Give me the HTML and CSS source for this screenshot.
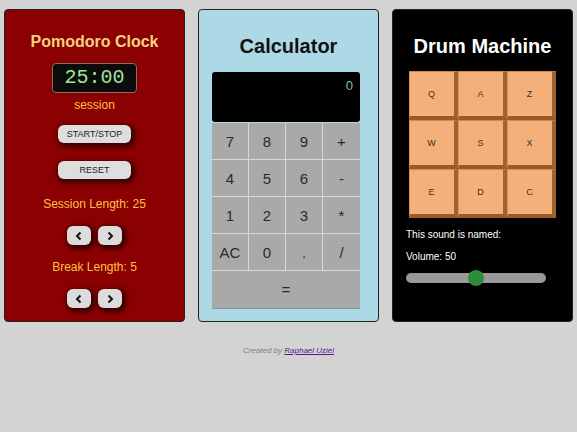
FILE: index.html
```html
<!DOCTYPE html>
<html>
<head>
<meta charset="utf-8">
<link rel="stylesheet" href="styles.css">
</head>
<body>
<main class="cards">
  <section class="card pomodoro">
    <h2 class="pomo-title">Pomodoro Clock</h2>
    <div class="timer">25:00</div>
    <div class="label session">session</div>
    <button class="pill start">START/STOP</button>
    <button class="pill reset">RESET</button>
    <div class="label len">Session Length: 25</div>
    <div class="arrows">
      <button class="arrow"><svg width="10" height="10" viewBox="0 0 10 10"><path d="M6.5 1.5 L3 5 L6.5 8.5" fill="none" stroke="#111" stroke-width="2"/></svg></button>
      <button class="arrow"><svg width="10" height="10" viewBox="0 0 10 10"><path d="M3.5 1.5 L7 5 L3.5 8.5" fill="none" stroke="#111" stroke-width="2"/></svg></button>
    </div>
    <div class="label len break">Break Length: 5</div>
    <div class="arrows">
      <button class="arrow"><svg width="10" height="10" viewBox="0 0 10 10"><path d="M6.5 1.5 L3 5 L6.5 8.5" fill="none" stroke="#111" stroke-width="2"/></svg></button>
      <button class="arrow"><svg width="10" height="10" viewBox="0 0 10 10"><path d="M3.5 1.5 L7 5 L3.5 8.5" fill="none" stroke="#111" stroke-width="2"/></svg></button>
    </div>
  </section>

  <section class="card calculator">
    <h2 class="big-title calc-title">Calculator</h2>
    <div class="calc">
      <div class="display">0</div>
      <div class="keys">
        <button class="key">7</button><button class="key">8</button><button class="key">9</button><button class="key">+</button>
        <button class="key">4</button><button class="key">5</button><button class="key">6</button><button class="key">-</button>
        <button class="key">1</button><button class="key">2</button><button class="key">3</button><button class="key">*</button>
        <button class="key">AC</button><button class="key">0</button><button class="key">.</button><button class="key">/</button>
        <button class="key equals">=</button>
      </div>
    </div>
  </section>

  <section class="card drum">
    <h2 class="big-title drum-title">Drum Machine</h2>
    <div class="pads">
      <div class="pad">Q</div><div class="pad">A</div><div class="pad">Z</div>
      <div class="pad">W</div><div class="pad">S</div><div class="pad">X</div>
      <div class="pad">E</div><div class="pad">D</div><div class="pad">C</div>
    </div>
    <p class="drum-text sound">This sound is named:</p>
    <p class="drum-text volume">Volume: 50</p>
    <input class="slider" type="range" min="0" max="100" value="50">
  </section>
</main>
<footer class="footer">Created by <a href="#">Raphael Uziel</a></footer>
</body>
</html>
```
FILE: styles.css
```css
* { box-sizing: border-box; }
html, body { margin: 0; padding: 0; }
body {
  background: #d3d3d3;
  font-family: "Liberation Sans", Arial, sans-serif;
  width: 577px;
  height: 432px;
  overflow: hidden;
}
.cards {
  display: flex;
  justify-content: center;
  gap: 13px;
  padding-top: 9px;
}
.card {
  width: 181px;
  height: 313px;
  border: 1px solid #222;
  border-radius: 4px;
  display: flex;
  flex-direction: column;
  align-items: center;
}
h2 { margin: 0; }

/* Pomodoro */
.pomodoro { background: #8b0000; padding-top: 23px; }
.pomo-title {
  color: #f7d27e;
  font-size: 16px;
  line-height: 18px;
  font-weight: bold;
}
.timer {
  margin-top: 12px;
  width: 85px;
  height: 30px;
  background: #0b0b0b;
  border: 1px solid #8a6a6a;
  border-radius: 4px;
  color: #9ee69a;
  font-family: "Liberation Mono", monospace;
  font-size: 20px;
  line-height: 28px;
  text-align: center;
}
.label {
  color: #ffc243;
  font-size: 12px;
  line-height: 14px;
}
.session { margin-top: 5px; }
.pill {
  width: 73px;
  height: 18px;
  border: none;
  border-radius: 6px;
  background: #dedede;
  color: #222;
  font-family: "Liberation Sans", Arial, sans-serif;
  font-size: 9px;
  padding: 0;
  box-shadow: 2px 2px 5px 2px rgba(30, 0, 0, 0.75);
}
.start { margin-top: 13px; }
.reset { margin-top: 18px; }
.len { margin-top: 18px; }
.break { margin-top: 15px; }
.arrows {
  display: flex;
  gap: 7px;
  margin-top: 15px;
}
.arrow {
  width: 24px;
  height: 19px;
  border: none;
  border-radius: 6px;
  background: #dcdcdc;
  padding: 0;
  display: flex;
  align-items: center;
  justify-content: center;
  box-shadow: 2px 2px 5px 2px rgba(30, 0, 0, 0.75);
}

/* Calculator */
.calculator { background: #add8e6; padding-top: 25px; }
.big-title {
  font-size: 20px;
  line-height: 23px;
  font-weight: bold;
}
.calc-title { color: #111; }
.calc {
  margin-top: 14px;
  align-self: flex-start;
  margin-left: 13px;
  width: 148px;
}
.display {
  height: 50px;
  background: #000;
  border-radius: 3px;
  color: #8fbf8f;
  font-size: 13px;
  text-align: right;
  padding: 6px 7px 0 0;
  line-height: 15px;
}
.keys {
  margin-top: 1px;
  display: grid;
  grid-template-columns: repeat(4, 37px);
  grid-auto-rows: 37px;
  box-shadow: 0 1px 0 #7c9aa3;
}
.key {
  background: #a9a9a9;
  border: none;
  border-right: 1px solid #d8d8d8;
  border-bottom: 1px solid #d8d8d8;
  font-family: "Liberation Sans", Arial, sans-serif;
  font-size: 15px;
  color: #2a2a2a;
  padding: 0;
}
.key:nth-child(4n) { border-right: none; }
.equals { grid-column: 1 / 5; border-right: none; border-bottom: none; }

/* Drum */
.drum { background: #000; padding-top: 25px; }
.drum-title { color: #fff; }
.pads {
  margin-top: 13px;
  display: grid;
  grid-template-columns: repeat(3, 49px);
  grid-auto-rows: 49px;
  width: 148px;
}
.pad {
  background: #f3b07a;
  border-top: 1px solid #cf8a4f;
  border-left: 1px solid #d4955c;
  border-right: 4px solid #a2622c;
  border-bottom: 4px solid #9a5a25;
  display: flex;
  align-items: center;
  justify-content: center;
  font-size: 9px;
  color: #333;
}
.drum-text {
  margin: 0;
  align-self: flex-start;
  margin-left: 13px;
  color: #fff;
  font-size: 10px;
  line-height: 12px;
}
.sound { margin-top: 11px; }
.volume { margin-top: 10px; }
.slider {
  -webkit-appearance: none;
  appearance: none;
  align-self: flex-start;
  margin: 10px 0 0 13px;
  width: 140px;
  height: 10px;
  background: #999;
  border-radius: 5px;
  outline: none;
}
.slider::-webkit-slider-thumb {
  -webkit-appearance: none;
  appearance: none;
  width: 16px;
  height: 16px;
  border-radius: 50%;
  background: #2e8b3c;
  border: none;
}

/* Footer */
.footer {
  margin-top: 24px;
  text-align: center;
  font-size: 8px;
  font-style: italic;
  color: #7f7f7f;
}
.footer a { color: #551a8b; text-decoration: underline; }
```
